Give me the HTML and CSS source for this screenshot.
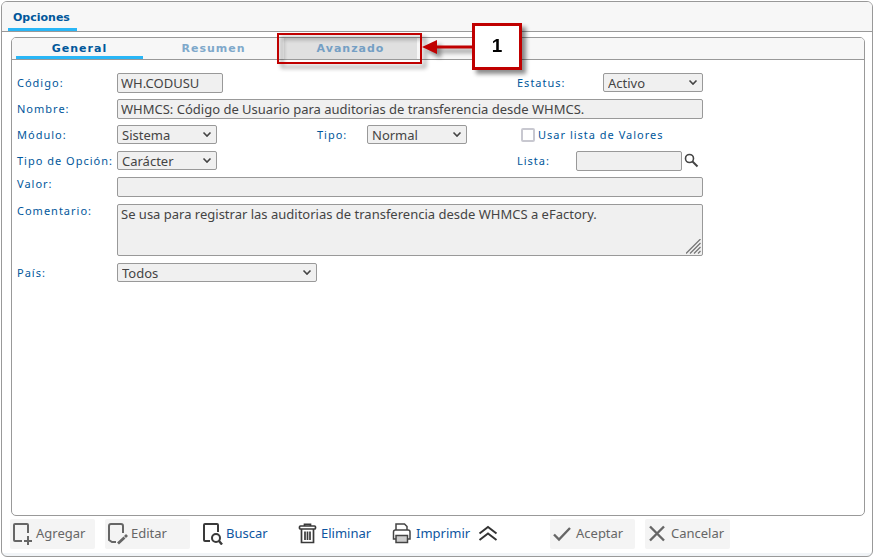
FILE: index.html
```html
<!DOCTYPE html>
<html lang="es">
<head>
    <meta charset="UTF-8">
    <meta name="viewport" content="width=device-width, initial-scale=1.0">
    <title>Opciones</title>
    <link rel="stylesheet" href="styles.css">
</head>
<body>
    <div class="window">
        <div class="window-header">
            <a href="#opciones" class="window-tab">Opciones</a>
        </div>

        <div class="panel">
            <nav class="tabs">
                <a href="#general" class="tab active">General</a>
                <a href="#resumen" class="tab">Resumen</a>
                <div class="tab-marked">
                    <a href="#avanzado" class="tab hover">Avanzado</a>
                    <div class="callout">
                        <div class="callout-frame"></div>
                        <svg class="callout-arrow" width="50" height="16" viewBox="0 0 50 16">
                            <path d="M0 8L15 1V15Z" fill="#c00000"/>
                            <path d="M12 8H50" stroke="#c00000" stroke-width="3"/>
                        </svg>
                        <div class="callout-number">1</div>
                    </div>
                </div>
            </nav>

            <form class="form">
                <label for="codigo">Código:</label>
                <input type="text" id="codigo" class="field short" value="WH.CODUSU">
                <div class="side">
                    <label for="estatus">Estatus:</label>
                    <select id="estatus" class="field medium"><option>Activo</option></select>
                </div>

                <label for="nombre">Nombre:</label>
                <input type="text" id="nombre" class="field wide" value="WHMCS: Código de Usuario para auditorias de transferencia desde WHMCS.">

                <label for="modulo">Módulo:</label>
                <select id="modulo" class="field medium"><option>Sistema</option></select>
                <label for="tipo">Tipo:</label>
                <select id="tipo" class="field medium"><option>Normal</option></select>
                <div class="side check">
                    <input type="checkbox" id="usarLista">
                    <label for="usarLista">Usar lista de Valores</label>
                </div>

                <label for="tipoOpcion">Tipo de Opción:</label>
                <select id="tipoOpcion" class="field medium"><option>Carácter</option></select>
                <div class="side">
                    <label for="lista">Lista:</label>
                    <input type="text" id="lista" class="field short">
                    <button type="button" class="search" aria-label="Buscar lista">
                        <svg width="15" height="15" viewBox="0 0 15 15" fill="none" stroke="#444">
                            <circle cx="5.5" cy="5.5" r="4" stroke-width="1.6"/>
                            <path d="M8.5 8.5L13.5 13.5" stroke-width="2"/>
                        </svg>
                    </button>
                </div>

                <label for="valor" class="raised">Valor:</label>
                <input type="text" id="valor" class="field wide">

                <label for="comentario" class="raised">Comentario:</label>
                <div class="comment wide">
                    <textarea id="comentario" class="field">Se usa para registrar las auditorias de transferencia desde WHMCS a eFactory.</textarea>
                    <svg class="grip" width="15" height="15" viewBox="0 0 15 15" stroke="#777" stroke-width="1.3">
                        <path d="M0 14.5L14.5 0M4 14.5L14.5 4M8 14.5L14.5 8M12 14.5L14.5 12"/>
                    </svg>
                </div>

                <label for="pais">País:</label>
                <select id="pais" class="field country wide"><option>Todos</option></select>
            </form>
        </div>

        <div class="toolbar">
            <button type="button" class="tool" disabled>
                <svg width="22" height="24" viewBox="0 0 22 24" fill="none" stroke="currentColor" stroke-width="2">
                    <path d="M10 20H3Q2 20 2 19V4Q2 3 3 3H15Q16 3 16 4V12M16 15V24M12 20H20"/>
                </svg>
                Agregar
            </button>
            <button type="button" class="tool" disabled>
                <svg width="22" height="24" viewBox="0 0 22 24" fill="none" stroke="currentColor" stroke-width="2">
                    <path d="M9 21H5L2 19V5Q2 3 4 3H14Q16 3 16 5V12"/>
                    <path d="M11 22.500L17.500 16.500M18 16L20 14" stroke-width="2.800"/>
                </svg>
                Editar
            </button>
            <button type="button" class="tool">
                <svg width="22" height="24" viewBox="0 0 22 24" fill="none" stroke="#3a3a3a" stroke-width="2">
                    <path d="M8 20H3Q2 20 2 19V4Q2 3 3 3H15Q16 3 16 4V11"/>
                    <circle cx="14" cy="17" r="4"/>
                    <path d="M17 20L20 23.500" stroke-width="2.400"/>
                </svg>
                Buscar
            </button>
            <button type="button" class="tool">
                <svg width="22" height="24" viewBox="0 0 22 24" fill="none" stroke="#3a3a3a" stroke-width="1.700">
                    <path d="M7.500 5V3.300H13.500V5"/>
                    <rect x="2.500" y="5" width="16" height="3" rx="1"/>
                    <path d="M4.500 8V21.500H16.500V8M8 10.500V19M10.500 10.500V19M13 10.500V19"/>
                </svg>
                Eliminar
            </button>
            <button type="button" class="tool">
                <svg width="22" height="24" viewBox="0 0 22 24" fill="none" stroke="#444" stroke-width="1.500">
                    <path d="M4 9V3H12.500L15 5.500V9"/>
                    <path d="M4 18H1.500V11Q1.500 9 3.500 9H16Q18 9 18 11V18H15.500"/>
                    <rect x="4" y="14.500" width="11.500" height="7" fill="#ccc"/>
                </svg>
                Imprimir
            </button>
            <button type="button" class="tool up" aria-label="Subir">
                <svg width="20" height="16" viewBox="0 0 20 16" fill="none" stroke="#333" stroke-width="2">
                    <path d="M1.500 8.500L10 2L18.500 8.500M1.500 15L10 8.500L18.500 15"/>
                </svg>
            </button>
            <button type="button" class="tool" disabled>
                <svg width="22" height="24" viewBox="0 0 22 24" fill="none" stroke="currentColor" stroke-width="2.400">
                    <path d="M2 13.500L7 18.500L18 7"/>
                </svg>
                Aceptar
            </button>
            <button type="button" class="tool" disabled>
                <svg width="22" height="24" viewBox="0 0 22 24" fill="none" stroke="currentColor" stroke-width="2.400">
                    <path d="M3 5.500L17 19.500M17 5.500L3 19.500"/>
                </svg>
                Cancelar
            </button>
        </div>
    </div>
</body>
</html>
```
FILE: styles.css
```css
* {
    box-sizing: border-box;
}
body {
    margin: 0;
    padding: 1px;
    height: 100vh;
    background: white;
    font-family: "Noto Sans", sans-serif;
    font-size: 13px;
    color: #444;
}
a {
    text-decoration: none;
}
.window {
    display: flex;
    flex-direction: column;
    height: 100%;
    border: 1px solid #999;
    border-radius: 6px;
    background: linear-gradient(#f1f4f7, #f1f4f7) bottom / 100% 3px no-repeat white;
    overflow: hidden;
}
.window-header {
    display: flex;
    height: 30px;
    padding-left: 6px;
    border-bottom: 1px solid #999;
    background: #f7f7f7;
}
.window-tab {
    padding: 8px 7px 0 5px;
    border-bottom: 3px solid #29b6f6;
    font: bold 11px/16px "DejaVu Sans", sans-serif;
    color: #01579b;
}
.panel {
    flex: 1;
    margin: 5px 7px 0 9px;
    border: 1px solid #999;
    border-radius: 5px;
}
.tabs {
    display: flex;
    gap: 7px;
    height: 22px;
    padding-left: 4px;
    border-bottom: 1px solid #999;
    border-radius: 4px 4px 0 0;
    background: #f7f7f7;
}
.tab {
    display: block;
    width: 127px;
    height: 21px;
    font: bold 11px/21px "DejaVu Sans", sans-serif;
    letter-spacing: 1px;
    text-align: center;
    color: #7fa9cb;
}
.tab.active {
    border-bottom: 3px solid #29b6f6;
    color: #01579b;
}
.tab.hover {
    width: 133px;
    background: #e0e0e0;
    color: #759fc4;
}
.tab-marked {
    position: relative;
}
.callout {
    position: absolute;
    top: -15px;
    left: -7px;
    display: flex;
    align-items: center;
    pointer-events: none;
    filter: drop-shadow(4px 4px 2px rgba(0, 0, 0, 0.45));
}
.callout-frame {
    width: 145px;
    height: 31px;
    margin-top: 3px;
    border: 2px solid #c00000;
}
.callout-number {
    width: 50px;
    height: 47px;
    border: 3px solid #c00000;
    background: white;
    font: bold 19px/40px "Liberation Sans", sans-serif;
    text-align: center;
    color: black;
}
.form {
    display: grid;
    grid-template-columns: 100px 200px 50px 150px 186px;
    grid-template-rows: repeat(4, 20px) 21px 53px 20px;
    row-gap: 6px;
    align-items: start;
    padding: 13px 5px;
}
label {
    font: 11px/20px "Noto Sans", sans-serif;
    letter-spacing: 1px;
    white-space: nowrap;
    color: #01579b;
}
.raised {
    line-height: 14px;
}
.field {
    height: 20px;
    margin: 0;
    padding: 0 3px;
    border: 1px solid #999;
    border-radius: 2px;
    background-color: #f0f0f0;
    font: 13px/18px "Noto Sans", sans-serif;
    color: #444;
}
select.field {
    height: 19px;
    padding: 0 4px;
    appearance: none;
    background-image: url("data:image/svg+xml,%3Csvg xmlns='http://www.w3.org/2000/svg' width='10' height='7' fill='none' stroke='%23444' stroke-width='1.6'%3E%3Cpath d='M1.500 1.500L5 5L8.500 1.500'/%3E%3C/svg%3E");
    background-repeat: no-repeat;
    background-position: right 4px center;
}
.short {
    width: 106px;
}
.medium {
    width: 100px;
}
.wide {
    grid-column: 2 / -1;
}
.country {
    width: 200px;
}
.side {
    grid-column: 5;
    display: flex;
    align-items: flex-start;
}
.side > label:first-child {
    margin-right: auto;
}
.check {
    align-items: center;
    gap: 3px;
    padding-left: 4px;
}
.check input {
    appearance: none;
    width: 14px;
    height: 14px;
    margin: 0;
    border: 2px solid #c8c8d0;
    border-radius: 2px;
    background: white;
}
.search {
    display: flex;
    width: 21px;
    padding: 2px 0 0 2px;
    border: 0;
    background: none;
}
.comment {
    position: relative;
    height: 52px;
}
.comment textarea {
    display: block;
    width: 100%;
    height: 100%;
    resize: none;
}
.grip {
    position: absolute;
    right: 2px;
    bottom: 2px;
}
.toolbar {
    display: flex;
    gap: 10px;
    padding: 3px 8px 7px;
}
.tool {
    display: flex;
    align-items: center;
    gap: 2px;
    width: 85px;
    height: 30px;
    padding: 0 2px 2px;
    border: 0;
    border-radius: 2px;
    background: none;
    font: 13px "Noto Sans", sans-serif;
    color: #0d55a0;
}
.tool:disabled {
    background: #f4f4f4;
    color: #666;
}
.tool.up {
    width: 64px;
    margin-left: -9px;
}
```
